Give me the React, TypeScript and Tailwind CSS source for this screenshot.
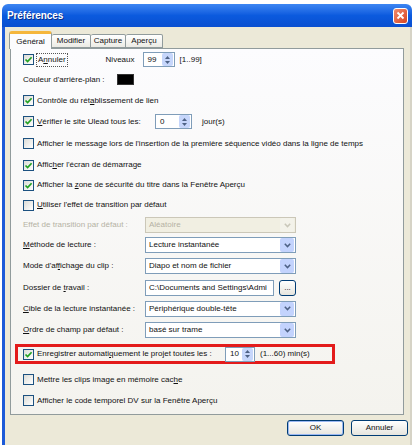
import React from 'react';

function Check({ checked }: { checked?: boolean }) {
  return (
    <div className="w-[11px] h-[11px] shrink-0 border border-[#1c5180] bg-gradient-to-br from-[#dcdcd7] to-white flex items-center justify-center">
      {checked && (
        <svg width="9" height="9" viewBox="0 0 9 9">
          <path d="M1.5 4.5 L3.6 6.6 L7.6 2.2" stroke="#21a121" strokeWidth="1.7" fill="none" />
        </svg>
      )}
    </div>
  );
}

function Spin({ value, w }: { value: string; w: string }) {
  return (
    <div className={`${w} h-[15px] border border-[#7f9db9] bg-white flex items-center justify-between`}>
      <span className="pl-[4px]">{value}</span>
      <div className="w-[11px] h-[13px] mr-[1px] bg-[#c6d6fb] rounded-[2px] flex flex-col items-center justify-center gap-[2px]">
        <svg width="5" height="3" viewBox="0 0 5 3"><path d="M0 3 L2.5 0 L5 3Z" fill="#4d6185" /></svg>
        <svg width="5" height="3" viewBox="0 0 5 3"><path d="M0 0 L2.5 3 L5 0Z" fill="#4d6185" /></svg>
      </div>
    </div>
  );
}

function Select({ value, disabled }: { value: string; disabled?: boolean }) {
  return (
    <div
      className={`w-[151px] h-[16px] border flex items-center justify-between ${
        disabled ? 'border-[#cbc7b8] bg-[#f1efe2] text-[#b5b2a4]' : 'border-[#7f9db9] bg-white'
      }`}
    >
      <span className="pl-[3px]">{value}</span>
      <div
        className={`w-[14px] h-[14px] mr-px rounded-[2px] flex items-center justify-center ${
          disabled ? 'bg-[#f3f2ea]' : 'bg-[#c3d3fd]'
        }`}
      >
        <svg width="7" height="5" viewBox="0 0 7 5">
          <path d="M0.8 0.8 L3.5 3.6 L6.2 0.8" stroke={disabled ? '#c9c7ba' : '#4d6185'} strokeWidth="1.5" fill="none" />
        </svg>
      </div>
    </div>
  );
}

function CheckRow({ checked, label, h }: { checked?: boolean; label: React.ReactNode; h: string }) {
  return (
    <div className={`${h} flex items-center`}>
      <Check checked={checked} />
      <span className="ml-[3px] whitespace-nowrap">{label}</span>
    </div>
  );
}

function FieldRow({ label, h, disabled, children }: { label: React.ReactNode; h: string; disabled?: boolean; children: React.ReactNode }) {
  return (
    <div className={`${h} flex items-center`}>
      <span className={`w-[122px] shrink-0 whitespace-nowrap ${disabled ? 'text-[#b5b2a4]' : ''}`}>{label}</span>
      {children}
    </div>
  );
}

function XPButton({ label, primary }: { label: React.ReactNode; primary?: boolean }) {
  return (
    <div
      className={`w-[57px] h-[16px] rounded-[3px] border border-[#003c74] bg-gradient-to-b from-white to-[#e6e5de] flex items-center justify-center ${
        primary ? 'shadow-[inset_0_0_0_1px_#9ab8f3]' : ''
      }`}
    >
      {label}
    </div>
  );
}

export default function App() {
  return (
    <div className="w-[412px] h-[445px] bg-white overflow-hidden pt-[4px] pl-[2px] font-['Liberation_Sans',Arial,sans-serif] text-[8px] text-[#111]">
      <div className="w-[410px]">
        {/* title bar */}
        <div className="h-[23px] rounded-t-[6px] bg-gradient-to-b from-[#3d86f2] via-[#0b5ade] to-[#0a4fd0] flex items-center justify-between pl-[5px] pr-[4px]">
          <span className="text-white font-bold text-[10px] tracking-[-0.1px] [text-shadow:1px_1px_0_#0a2f8a]">Préférences</span>
          <div className="w-[15px] h-[16px] rounded-[3px] border border-white bg-gradient-to-br from-[#f08a6c] to-[#d6431d] flex items-center justify-center">
            <svg width="9" height="9" viewBox="0 0 9 9">
              <path d="M1.5 1.5 L7.5 7.5 M7.5 1.5 L1.5 7.5" stroke="white" strokeWidth="1.8" />
            </svg>
          </div>
        </div>

        {/* body */}
        <div className="h-[420px] bg-[#ece9d8] border-l-[3px] border-l-[#1c5ad8] border-r-[2px] border-r-[#d6d3c6] pt-[4px]">
          {/* tabs */}
          <div className="flex items-end h-[17px] pl-[4px] relative z-10">
            <div className="w-[43px] h-[18px] -mb-px bg-[#fcfcfe] border border-[#919b9c] border-b-0 border-t-[3px] border-t-[#f5b63c] rounded-t-[3px] flex items-center justify-center">
              Général
            </div>
            <div className="w-[39px] h-[14px] bg-gradient-to-b from-white to-[#ecebe5] border border-[#919b9c] border-l-0 rounded-t-[2px] flex items-center justify-center">
              Modifier
            </div>
            <div className="w-[35px] h-[14px] bg-gradient-to-b from-white to-[#ecebe5] border border-[#919b9c] border-l-0 rounded-t-[2px] flex items-center justify-center">
              Capture
            </div>
            <div className="w-[37px] h-[14px] bg-gradient-to-b from-white to-[#ecebe5] border border-[#919b9c] border-l-0 rounded-t-[2px] flex items-center justify-center">
              Aperçu
            </div>
          </div>

          {/* panel */}
          <div className="ml-[5px] w-[394px] h-[367px] border border-[#919b9c] bg-gradient-to-b from-[#fcfcfe] to-[#f4f3ee] pl-[12px] pt-px">
            <div className="h-[19px] flex items-center">
              <Check checked />
              <span className="ml-[2px] px-px border border-dotted border-[#555]">
                A<span className="underline">n</span>nuler
              </span>
              <span className="ml-[38px] w-[37px]">Niveaux</span>
              <Spin value="99" w="w-[32px]" />
              <span className="ml-[5px]">[1..99]</span>
            </div>
            <div className="h-[21px] flex items-center">
              <span className="w-[94px]">Couleur d'arrière-plan :</span>
              <div className="w-[17px] h-[11px] bg-black border border-[#333]" />
            </div>
            <CheckRow h="h-[21px]" checked label={<>Contrôle du rét<span className="underline">a</span>blissement de lien</>} />
            <div className="h-[21px] flex items-center">
              <Check checked />
              <span className="ml-[3px] w-[118px]">
                <span className="underline">V</span>érifier le site Ulead tous les:
              </span>
              <Spin value="0" w="w-[37px]" />
              <span className="ml-[10px]">jour(s)</span>
            </div>
            <CheckRow h="h-[23px]" label="Afficher le message lors de l'insertion de la première séquence vidéo dans la ligne de temps" />
            <CheckRow h="h-[20px]" checked label={<>Affic<span className="underline">h</span>er l'écran de démarrage</>} />
            <CheckRow h="h-[20px]" checked label={<>Afficher la <span className="underline">z</span>one de sécurité du titre dans la Fenêtre Aperçu</>} />
            <CheckRow h="h-[20px]" label={<><span className="underline">U</span>tiliser l'effet de transition par défaut</>} />
            <FieldRow h="h-[20px]" disabled label="Effet de transition par défaut :">
              <Select value="Aléatoire" disabled />
            </FieldRow>
            <FieldRow h="h-[20px]" label={<><span className="underline">M</span>éthode de lecture :</>}>
              <Select value="Lecture instantanée" />
            </FieldRow>
            <FieldRow h="h-[22px]" label={<>Mode d'af<span className="underline">f</span>ichage du clip :</>}>
              <Select value="Diapo et nom de fichier" />
            </FieldRow>
            <FieldRow h="h-[21px]" label={<>Dossier de <span className="underline">t</span>ravail :</>}>
              <div className="w-[129px] h-[16px] border border-[#7f9db9] bg-white flex items-center overflow-hidden">
                <span className="pl-[3px] whitespace-nowrap">C:\Documents and Settings\Admi</span>
              </div>
              <div className="ml-[5px] w-[17px] h-[16px] rounded-[3px] border border-[#003c74] bg-gradient-to-b from-white to-[#e6e5de] flex items-center justify-center leading-none">
                ...
              </div>
            </FieldRow>
            <FieldRow h="h-[21px]" label={<><span className="underline">C</span>ible de la lecture instantanée :</>}>
              <Select value="Périphérique double-tête" />
            </FieldRow>
            <FieldRow h="h-[22px]" label={<><span className="underline">O</span>rdre de champ par défaut :</>}>
              <Select value="basé sur trame" />
            </FieldRow>
            <div className="h-[26px] flex items-center">
              <div className="-ml-[8px] w-[320px] h-[20px] border-[3px] border-[#e31b1b] flex items-center pl-[5px]">
                <Check checked />
                <span className="ml-[3px] w-[188px] whitespace-nowrap">
                  Enregistrer automati<span className="underline">q</span>uement le projet toutes les :
                </span>
                <Spin value="10" w="w-[30px]" />
                <span className="ml-[5px] whitespace-nowrap">(1...60) min(s)</span>
              </div>
            </div>
            <CheckRow h="h-[25px]" label={<>Mettre les clips image en mémoire cac<span className="underline">h</span>e</>} />
            <CheckRow h="h-[17px]" label="Afficher le code temporel DV sur la Fenêtre Aperçu" />
          </div>

          {/* buttons */}
          <div className="mt-[5px] flex justify-end gap-[7px] pr-[2px]">
            <XPButton label="OK" primary />
            <XPButton label="Annuler" />
          </div>
        </div>
      </div>
    </div>
  );
}
